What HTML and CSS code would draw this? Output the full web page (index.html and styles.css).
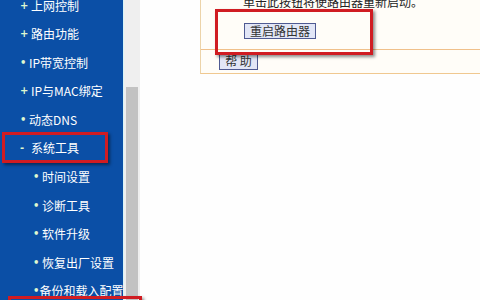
FILE: index.html
```html
<!DOCTYPE html>
<html lang="zh-CN">
<head>
  <meta charset="UTF-8" />
  <title>系统工具 - 重启路由器</title>
  <link rel="stylesheet" href="styles.css">
</head>
<body>
  <div class="page">
    <div class="sidebar">
      <ul class="menu">
        <li class="item"><span class="mark">+</span>上网控制</li>
        <li class="item"><span class="mark">+</span>路由功能</li>
        <li class="item"><span class="mark dot">•</span>IP带宽控制</li>
        <li class="item"><span class="mark">+</span>IP与MAC绑定</li>
        <li class="item"><span class="mark dot">•</span>动态DNS</li>
        <li class="item"><span class="mark">-</span>系统工具</li>
        <li class="item sub"><span class="mark dot">•</span>时间设置</li>
        <li class="item sub"><span class="mark dot">•</span>诊断工具</li>
        <li class="item sub"><span class="mark dot">•</span>软件升级</li>
        <li class="item sub"><span class="mark dot">•</span>恢复出厂设置</li>
        <li class="item sub"><span class="mark dot">•</span>备份和载入配置</li>
      </ul>
    </div>
    <div class="scrollbar"><div class="thumb"></div></div>
    <div class="main">
      <div class="frame">
        <div class="desc">单击此按钮将使路由器重新启动。</div>
        <div class="action"><button class="btn">重启路由器</button></div>
        <div class="help"><button class="btn">帮 助</button></div>
      </div>
    </div>

    <div class="mark-box box-menu"></div>
    <div class="mark-box box-backup"></div>
    <div class="mark-box box-reboot"></div>
  </div>
</body>
</html>
```

FILE: styles.css
```css
body {
  margin: 0;
  font-family: "Noto Sans CJK SC", "DejaVu Sans", sans-serif;
  font-size: 12px;
  background: #fefefe;
  overflow: hidden;
}
.page {
  position: relative;
  display: flex;
  height: 300px;
  overflow: hidden;
}
.sidebar {
  width: 123px;
  background: #0b4fa6;
  border-right: 1px solid #d8f4f8;
  flex-shrink: 0;
}
.menu {
  list-style: none;
  margin: -9.3px 0 0 0;
  padding: 0;
}
.item {
  height: 28.6px;
  display: flex;
  align-items: center;
  padding-left: 20px;
  color: #fff;
  white-space: nowrap;
}
.item.sub {
  padding-left: 33px;
}
.mark {
  width: 11px;
  color: #dff8d0;
  font-weight: bold;
  font-family: "DejaVu Sans", sans-serif;
  font-size: 10px;
}
.mark.dot {
  width: 9px;
}
.scrollbar {
  width: 16px;
  flex-shrink: 0;
  background: #efefef;
  display: flex;
  flex-direction: column;
  justify-content: flex-end;
}
.thumb {
  height: 213px;
  width: 12px;
  margin-left: 2px;
  background: #c2c2c2;
}
.main {
  flex: 1;
  padding-left: 60px;
}
.frame {
  margin-top: -8px;
  background: #fffdf8;
  border-left: 1px solid #ecd3a8;
  border-bottom: 1px solid #f0c890;
}
.desc {
  height: 20px;
  line-height: 20px;
  padding-left: 42px;
  color: #222;
  white-space: nowrap;
}
.action {
  padding: 10px 0 10px 43px;
}
.help {
  border-top: 1px solid #f0c08a;
  padding: 2px 0 3px 18px;
}
.btn {
  font-family: "Noto Sans CJK SC", sans-serif;
  font-size: 12px;
  line-height: 14px;
  height: 16px;
  padding: 0 5px;
  margin: 0;
  background: #e2e6f6;
  color: #333;
  border: 1px solid #4f5a92;
  border-radius: 0;
}
.help .btn {
  height: 17px;
  width: 39px;
}
.mark-box {
  position: absolute;
  border: 3px solid #d01c22;
  box-shadow: 2px 2px 3px rgba(0, 0, 0, 0.45);
}
.box-menu {
  left: 2px;
  top: 132px;
  width: 100px;
  height: 25px;
}
.box-backup {
  left: 8px;
  top: 296px;
  width: 128px;
  height: 30px;
}
.box-reboot {
  left: 215px;
  top: 9px;
  width: 152px;
  height: 40px;
}
```
